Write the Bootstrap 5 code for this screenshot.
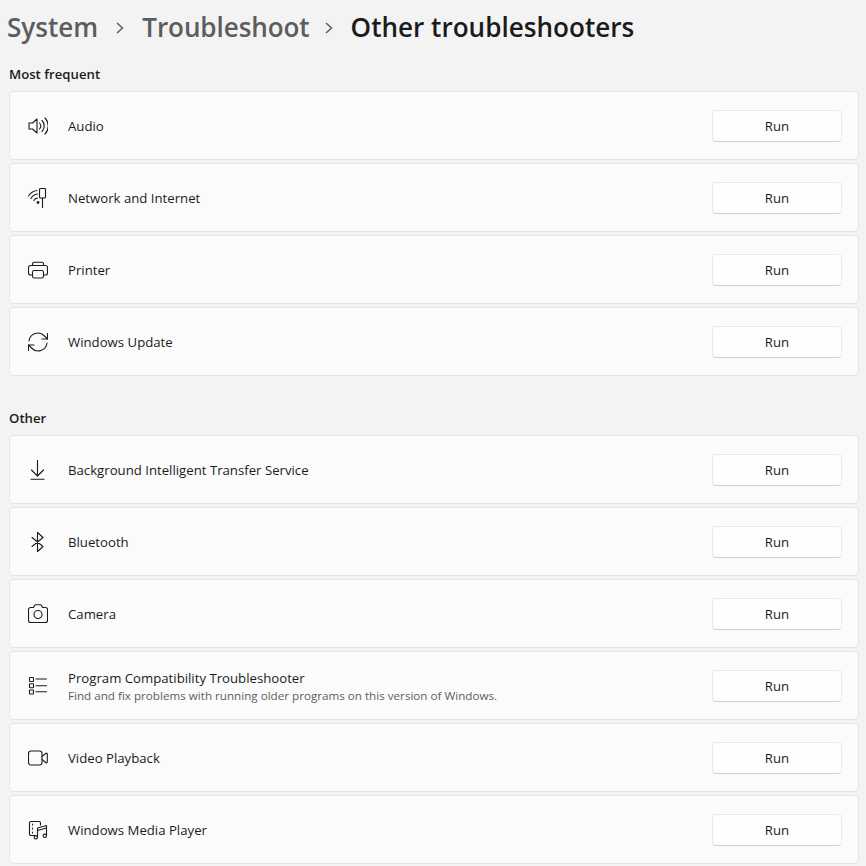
<!DOCTYPE html>
<html>
<head>
    <title>Other troubleshooters</title>
    <link href="https://cdn.jsdelivr.net/npm/bootstrap@5.3.0/dist/css/bootstrap.min.css" rel="stylesheet">
    <style>
        body { background: #f3f3f3; color: #1b1b1b; font-family: "Open Sans", "Noto Sans", sans-serif; font-size: 13.2px; overflow: hidden; }
        .page-wrap { padding: 0 7px 0 9px; }
        .crumbs { font-size: 26.1px; font-weight: 600; height: 55px; margin-left: -2px; gap: 16px; }
        .crumbs .past { color: #5d5d5d; }
        .crumbs .mid { margin-right: -3px; letter-spacing: -.1px; }
        .crumbs svg { width: 12px; height: 12px; }
        .section-title { font-size: 13.2px; font-weight: 600; line-height: 20px; height: 36px; padding-top: 9px; margin: 0; }
        .section-title.later { height: 59px; padding-top: 32px; }
        .rows { gap: 3px; }
        .setting { background: #fbfbfb; border: 1px solid #e5e5e5; border-radius: 4px; height: 69px; padding: 0 16px 0 18px; gap: 20px; }
        .setting svg.ico { width: 20px; height: 20px; flex: none; fill: none; stroke: #1b1b1b; stroke-width: 1.1; stroke-linecap: round; stroke-linejoin: round; }
        .setting .hint { font-size: 11.65px; color: #5d5d5d; line-height: 14px; margin-top: 2px; }
        .setting .name { line-height: 18px; }
        .run-btn { width: 130px; height: 32px; padding: 2px 0 0; background: #fefefe; border: 1px solid #e9e9e9; border-bottom-color: #d0d0d0; border-radius: 4px; font-size: 13.2px; color: #1b1b1b; }
    </style>
</head>
<body>
<div class="page-wrap">
    <div class="crumbs d-flex align-items-center">
        <span class="past">System</span>
        <svg viewBox="0 0 12 12" fill="none" stroke="#5d5d5d" stroke-width="1.5"><path d="M3 1l5.500 5-5.500 5"/></svg>
        <span class="past mid">Troubleshoot</span>
        <svg viewBox="0 0 12 12" fill="none" stroke="#5d5d5d" stroke-width="1.5"><path d="M3 1l5.500 5-5.500 5"/></svg>
        <span>Other troubleshooters</span>
    </div>

    <h6 class="section-title">Most frequent</h6>
    <div class="rows d-flex flex-column">
        <div class="setting d-flex align-items-center">
            <svg class="ico" viewBox="0 0 20 20"><path d="M1 7h3.500L9 3v14l-4.500-4H1z"/><path d="M11.500 7a4.500 4.500 0 0 1 0 6"/><path d="M14 4.500a8 8 0 0 1 0 11"/><path d="M17 2a11.500 11.500 0 0 1 0 16"/></svg>
            <div class="flex-grow-1 name">Audio</div>
            <button class="btn run-btn">Run</button>
        </div>
        <div class="setting d-flex align-items-center">
            <svg class="ico" viewBox="0 0 20 20"><rect x="11.500" y="0.500" width="6" height="9.500" rx="1"/><path d="M14.500 10v9.500"/><path d="M0.500 8a12 12 0 0 1 8.500-5.500"/><path d="M3 10.500a8 8 0 0 1 6.500-4.500"/><path d="M6 12.500a4.500 4.500 0 0 1 3.500-2.500"/><circle cx="10" cy="14.500" r=".9"/></svg>
            <div class="flex-grow-1 name">Network and Internet</div>
            <button class="btn run-btn">Run</button>
        </div>
        <div class="setting d-flex align-items-center">
            <svg class="ico" viewBox="0 0 20 20"><path d="M4.500 5.500V4A1.800 1.800 0 0 1 6.300 2.200h7.400A1.800 1.800 0 0 1 15.500 4v1.500"/><path d="M4.500 15H2.500A2 2 0 0 1 .5 13V7.500a2 2 0 0 1 2-2h15a2 2 0 0 1 2 2V13a2 2 0 0 1-2 2h-2"/><rect x="4.500" y="10.500" width="11" height="7.500" rx="1.800"/></svg>
            <div class="flex-grow-1 name">Printer</div>
            <button class="btn run-btn">Run</button>
        </div>
        <div class="setting d-flex align-items-center">
            <svg class="ico" viewBox="0 0 20 20"><path d="M1 9A9 9 0 0 1 16.500 4l3 3"/><path d="M19.500 1.500V7H14"/><path d="M19 11A9 9 0 0 1 3.500 16l-3-3"/><path d="M.5 18.500V13H6"/></svg>
            <div class="flex-grow-1 name">Windows Update</div>
            <button class="btn run-btn">Run</button>
        </div>
    </div>

    <h6 class="section-title later">Other</h6>
    <div class="rows d-flex flex-column">
        <div class="setting d-flex align-items-center">
            <svg class="ico" viewBox="0 0 20 20"><path d="M9.500 .5v15.500"/><path d="M3.500 10l6 6 6-6"/><path d="M3 19.200h13"/></svg>
            <div class="flex-grow-1 name">Background Intelligent Transfer Service</div>
            <button class="btn run-btn">Run</button>
        </div>
        <div class="setting d-flex align-items-center">
            <svg class="ico" viewBox="0 0 20 20"><path d="M4 5.500l11 9-5.500 5V.5l5.500 5-11 9"/></svg>
            <div class="flex-grow-1 name">Bluetooth</div>
            <button class="btn run-btn">Run</button>
        </div>
        <div class="setting d-flex align-items-center">
            <svg class="ico" viewBox="0 0 20 20"><path d="M5.500 3.500l1-2a1.500 1.500 0 0 1 1.300-.8h4.400a1.500 1.500 0 0 1 1.300.8l1 2h3A2 2 0 0 1 19.500 5.500v11a2 2 0 0 1-2 2h-15a2 2 0 0 1-2-2v-11a2 2 0 0 1 2-2z"/><circle cx="10" cy="10.500" r="4"/></svg>
            <div class="flex-grow-1 name">Camera</div>
            <button class="btn run-btn">Run</button>
        </div>
        <div class="setting d-flex align-items-center">
            <svg class="ico" viewBox="0 0 20 20"><rect x="1.500" y="1.500" width="4" height="4" rx=".5"/><rect x="1.500" y="7.700" width="4" height="4" rx=".5"/><rect x="1.500" y="14" width="4" height="4" rx=".5"/><path d="M8 3h10.500M8 9.700h10.500M8 15.800h10.500"/></svg>
            <div class="flex-grow-1 name">Program Compatibility Troubleshooter
                <div class="hint">Find and fix problems with running older programs on this version of Windows.</div>
            </div>
            <button class="btn run-btn">Run</button>
        </div>
        <div class="setting d-flex align-items-center">
            <svg class="ico" viewBox="0 0 20 20"><rect x=".5" y="3" width="13.500" height="14" rx="2.500"/><path d="M14 8.500l3.700-3a.9.9 0 0 1 1.600.7v7.600a.9.9 0 0 1-1.600.7L14 11.500"/></svg>
            <div class="flex-grow-1 name">Video Playback</div>
            <button class="btn run-btn">Run</button>
        </div>
        <div class="setting d-flex align-items-center">
            <svg class="ico" viewBox="0 0 20 20"><path d="M6.500 15.500H3A1.500 1.500 0 0 1 1.500 14V3A1.500 1.500 0 0 1 3 1.500h8A1.500 1.500 0 0 1 12.500 3v2"/><path d="M4.500 4v1M4.500 8v1M4.500 12v1"/><path d="M9.500 17V8l9-2.500V15.500"/><path d="M9.500 10.500l9-2.500"/><circle cx="7.800" cy="17.300" r="1.700"/><circle cx="16.800" cy="15.800" r="1.700"/></svg>
            <div class="flex-grow-1 name">Windows Media Player</div>
            <button class="btn run-btn">Run</button>
        </div>
    </div>
</div>
<script src="https://cdn.jsdelivr.net/npm/bootstrap@5.3.0/dist/js/bootstrap.bundle.min.js"></script>
</body>
</html>
